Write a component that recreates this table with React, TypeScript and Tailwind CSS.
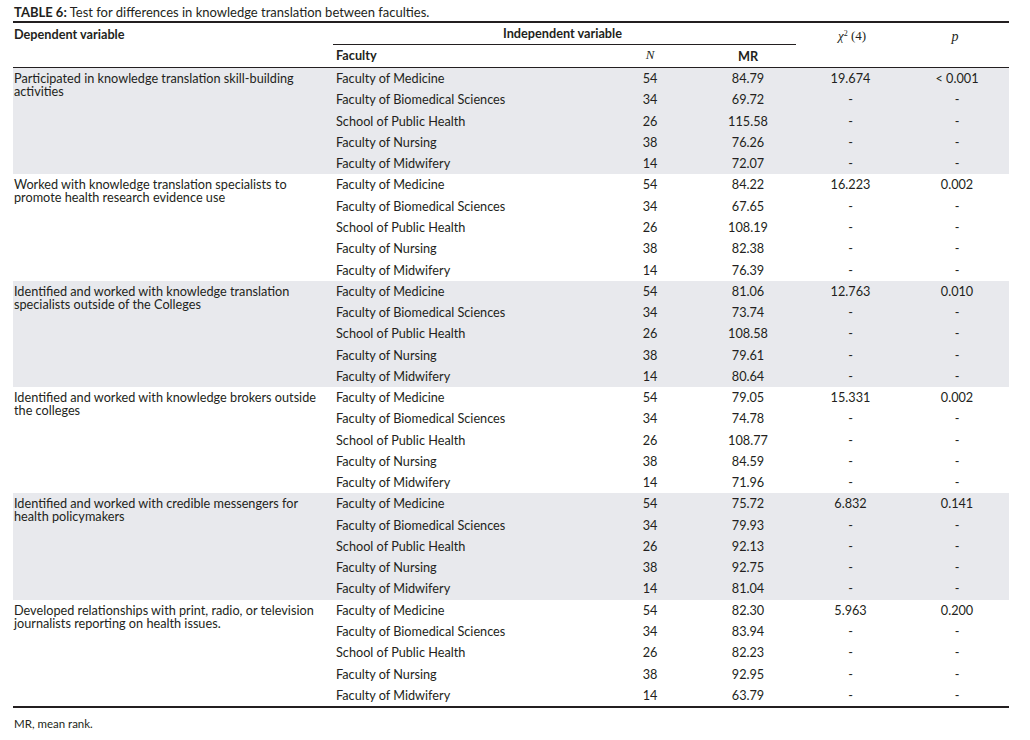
const faculties = [
  "Faculty of Medicine",
  "Faculty of Biomedical Sciences",
  "School of Public Health",
  "Faculty of Nursing",
  "Faculty of Midwifery",
];
const counts = ["54", "34", "26", "38", "14"];

type Group = { label: string; mr: string[]; chi: string; p: string };

const groups: Group[] = [
  {
    label: "Participated in knowledge translation skill-building activities",
    mr: ["84.79", "69.72", "115.58", "76.26", "72.07"],
    chi: "19.674",
    p: "< 0.001",
  },
  {
    label: "Worked with knowledge translation specialists to promote health research evidence use",
    mr: ["84.22", "67.65", "108.19", "82.38", "76.39"],
    chi: "16.223",
    p: "0.002",
  },
  {
    label: "Identified and worked with knowledge translation specialists outside of the Colleges",
    mr: ["81.06", "73.74", "108.58", "79.61", "80.64"],
    chi: "12.763",
    p: "0.010",
  },
  {
    label: "Identified and worked with knowledge brokers outside the colleges",
    mr: ["79.05", "74.78", "108.77", "84.59", "71.96"],
    chi: "15.331",
    p: "0.002",
  },
  {
    label: "Identified and worked with credible messengers for health policymakers",
    mr: ["75.72", "79.93", "92.13", "92.75", "81.04"],
    chi: "6.832",
    p: "0.141",
  },
  {
    label: "Developed relationships with print, radio, or television journalists reporting on health issues.",
    mr: ["82.30", "83.94", "82.23", "92.95", "63.79"],
    chi: "5.963",
    p: "0.200",
  },
];

const cols = "grid grid-cols-[320px_267px_100px_96px_109px_104px]";

const App = () => {
  return (
    <div className="w-[1030px] h-[740px] bg-white text-[#231f20] font-['Lato','Open_Sans',sans-serif] text-[12.7px]">
      <div className="pl-[13px] pr-[21px] pt-[5px]">
        {/* Caption */}
        <p className="text-[13px] leading-[15px] pl-[1px]">
          <span className="font-bold">TABLE 6:</span> Test for differences in knowledge translation between faculties.
        </p>

        <div className="mt-[1px] border-t-2 border-[#231f20] border-b-2 w-[996px]">
          {/* Header */}
          <div className={`${cols} border-b border-[#231f20]`}>
            <div className="row-span-2 font-bold pl-[1px] pt-[4px] leading-[14px]">Dependent variable</div>
            <div className="col-span-3 h-[22px] flex items-center justify-center font-bold border-b border-[#231f20] pr-[4px]">
              Independent variable
            </div>
            <div className="row-span-2 pt-[3px] text-center font-['Liberation_Serif',serif] text-[13px] pl-[3px]">
              <i>χ</i>
              <sup className="text-[8px]">2</sup> (4)
            </div>
            <div className="row-span-2 pt-[3px] text-center font-['Liberation_Serif',serif] italic text-[14px] pr-[4px]">
              p
            </div>
            <div className="h-[22px] flex items-center font-bold pl-[3px]">Faculty</div>
            <div className="h-[22px] flex items-center justify-center font-['Liberation_Serif',serif] italic text-[13px] pb-[2px]">
              N
            </div>
            <div className="h-[22px] flex items-center justify-center font-bold pt-[2px]">MR</div>
          </div>

          {/* Body */}
          {groups.map((g, gi) => (
            <div key={gi} className={`${cols} ${gi % 2 === 0 ? "bg-[#e8e9ed]" : ""}`}>
              <div className="row-span-5 pl-[1px] pr-[14px] pt-[4px] leading-[13px]">{g.label}</div>
              {faculties.map((f, i) => (
                <div key={f} className="contents">
                  <div className="h-[21.27px] flex items-center pl-[3px]">{f}</div>
                  <div className="h-[21.27px] flex items-center justify-center">{counts[i]}</div>
                  <div className="h-[21.27px] flex items-center justify-center">{g.mr[i]}</div>
                  <div className="h-[21.27px] flex items-center justify-center">{i === 0 ? g.chi : "-"}</div>
                  <div className="h-[21.27px] flex items-center justify-center">{i === 0 ? g.p : "-"}</div>
                </div>
              ))}
            </div>
          ))}
        </div>

        {/* Footnote */}
        <p className="text-[11.5px] mt-[7px] pl-[1px]">MR, mean rank.</p>
      </div>
    </div>
  );
};

export default App;
